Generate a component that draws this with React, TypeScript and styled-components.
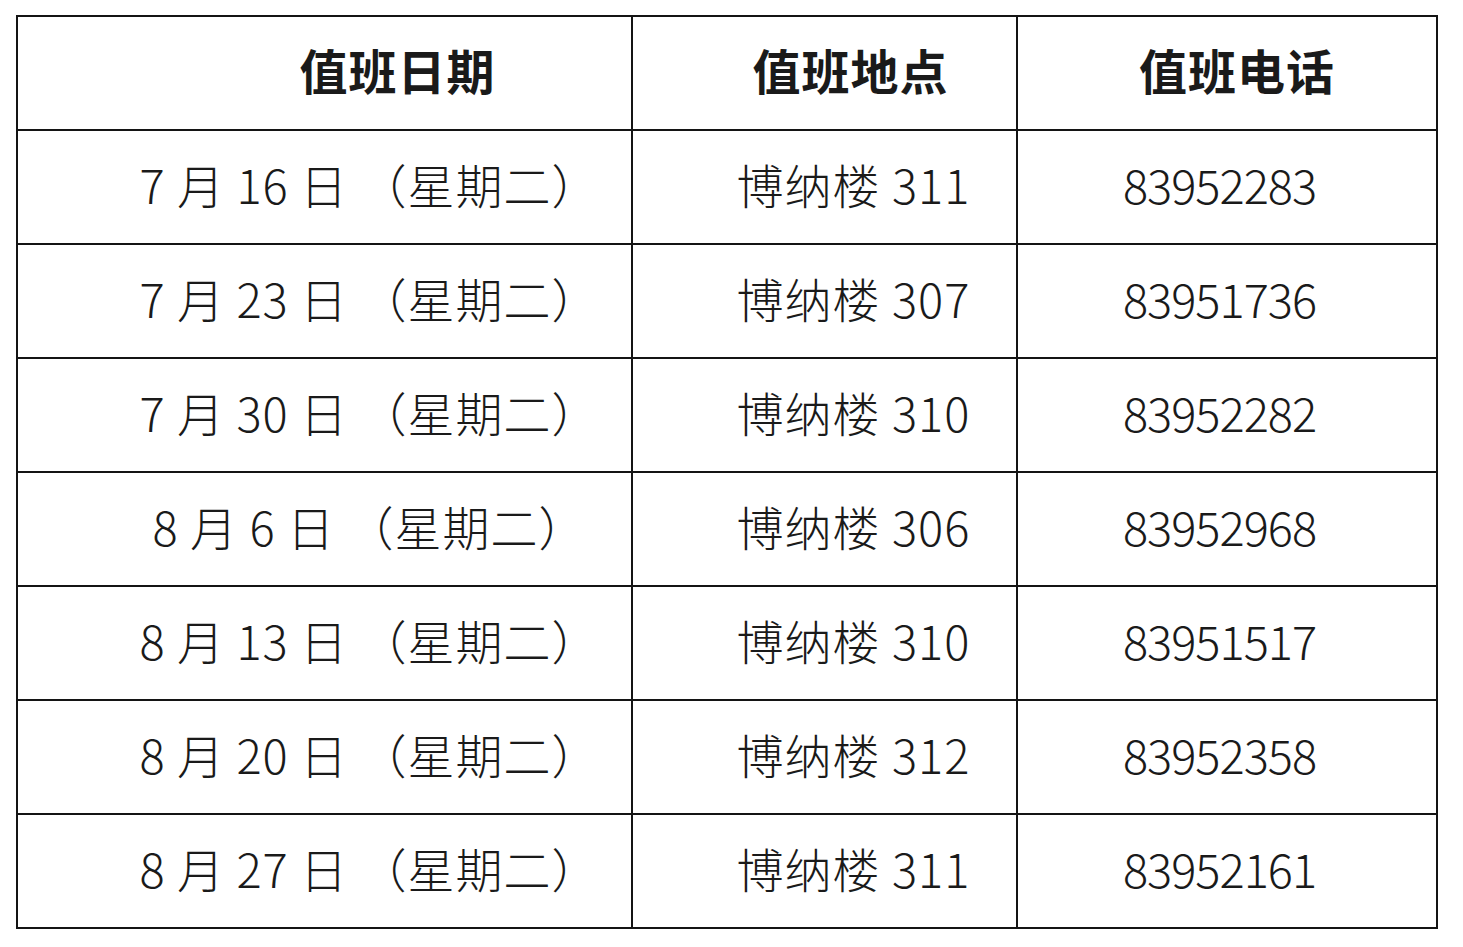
import React from 'react';
import styled, { createGlobalStyle } from 'styled-components';

const GlobalStyle = createGlobalStyle`
    html, body {
        margin: 0;
        padding: 0;
        background: #ffffff;
    }
`;

const Page = styled.div`
    padding: 15px 0 0 16px;
    font-family: 'Noto Sans CJK SC', 'Noto Sans', sans-serif;
    color: #1a1a1a;
`;

const Tabell = styled.table`
    border-collapse: collapse;
    table-layout: fixed;
    width: 1420px;
    border: 2px solid #141414;
`;

const Rad = styled.tr`
    height: 114px;
`;

// $skyv flytter teksten: positiv = mot høyre, negativ = mot venstre
const Celle = styled.td<{ $skyv?: number; $header?: boolean; $sperring?: number }>`
    border: 2px solid #141414;
    padding: 0 ${(p) => Math.max(0, -(p.$skyv ?? 0))}px 8px ${(p) => Math.max(0, p.$skyv ?? 0)}px;
    text-align: center;
    vertical-align: middle;
    white-space: nowrap;
    font-size: ${(p) => (p.$header ? 48 : 47)}px;
    font-weight: ${(p) => (p.$header ? 700 : 300)};
    line-height: 1;
    letter-spacing: ${(p) => p.$sperring ?? 0}px;
`;

type Vakt = { dato: string; sted: string; telefon: string };

const vakter: Vakt[] = [
    { dato: '7 月 16 日 （星期二）', sted: '博纳楼 311', telefon: '83952283' },
    { dato: '7 月 23 日 （星期二）', sted: '博纳楼 307', telefon: '83951736' },
    { dato: '7 月 30 日 （星期二）', sted: '博纳楼 310', telefon: '83952282' },
    { dato: '8 月 6 日 （星期二）', sted: '博纳楼 306', telefon: '83952968' },
    { dato: '8 月 13 日 （星期二）', sted: '博纳楼 310', telefon: '83951517' },
    { dato: '8 月 20 日 （星期二）', sted: '博纳楼 312', telefon: '83952358' },
    { dato: '8 月 27 日 （星期二）', sted: '博纳楼 311', telefon: '83952161' },
];

export default function App() {
    return (
        <>
            <GlobalStyle />
            <Page>
                <Tabell>
                    <colgroup>
                        <col style={{ width: 615 }} />
                        <col style={{ width: 385 }} />
                        <col style={{ width: 420 }} />
                    </colgroup>
                    <tbody>
                        <Rad>
                            <Celle $header $skyv={146} $sperring={1}>
                                值班日期
                            </Celle>
                            <Celle $header $skyv={52} $sperring={1}>
                                值班地点
                            </Celle>
                            <Celle $header $skyv={20} $sperring={1}>
                                值班电话
                            </Celle>
                        </Rad>
                        {vakter.map((v) => (
                            <Rad key={v.dato}>
                                <Celle $skyv={90} $sperring={1}>
                                    {v.dato}
                                </Celle>
                                <Celle $skyv={58} $sperring={1}>
                                    {v.sted}
                                </Celle>
                                <Celle $skyv={-15} $sperring={-1}>
                                    {v.telefon}
                                </Celle>
                            </Rad>
                        ))}
                    </tbody>
                </Tabell>
            </Page>
        </>
    );
}
